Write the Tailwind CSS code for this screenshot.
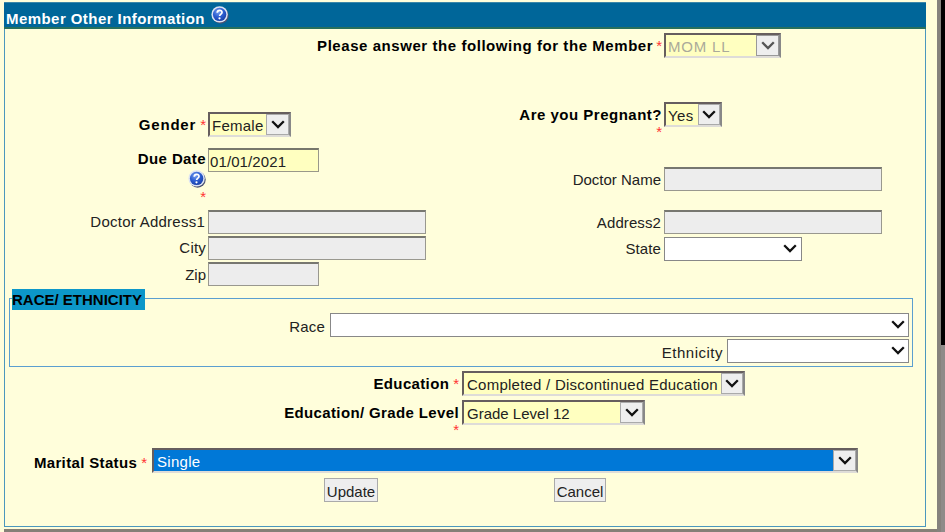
<!DOCTYPE html>
<html lang="en">
<head>
<meta charset="utf-8">
<title>Member Other Information</title>
<script src="https://cdn.jsdelivr.net/npm/@tailwindcss/browser@4"></script>
</head>
<body class="w-[945px] h-[532px] overflow-hidden bg-[#fffedb] font-['Liberation_Sans',Arial,sans-serif] text-[15px] leading-[17px] text-[#222]">
<svg class="absolute h-0 w-0">
  <defs>
    <radialGradient id="ball" cx=".4" cy=".3" r=".75"><stop offset="0" stop-color="#7ba2ee"/><stop offset=".5" stop-color="#2e5fd3"/><stop offset="1" stop-color="#173da5"/></radialGradient>
    <symbol id="help" viewBox="0 0 18 18"><circle cx="9.6" cy="9.6" r="8.1" fill="#4c5372"/><circle cx="8.6" cy="8.4" r="8.2" fill="#dce3f3"/><circle cx="8.6" cy="8.4" r="6.7" fill="url(#ball)"/><path d="M6.2 6.7C6.4 3.6 11.2 3.7 11 6.5C10.9 8.1 8.8 8.1 8.6 10" fill="none" stroke="#fff" stroke-width="1.7"/><circle cx="8.5" cy="12.3" r="1.1" fill="#fff"/></symbol>
    <symbol id="chev" viewBox="0 0 14 9"><path d="M1.2 1.2L7 7L12.8 1.2" fill="none" stroke="currentColor" stroke-width="2.3"/></symbol>
  </defs>
</svg>
<div class="flex h-[532px]">
  <div class="flex w-[937px] flex-col pl-[4px] pt-[2px]">
    <main class="flex h-[525px] w-[922px] flex-col border-[1.5px] border-t-0 border-[#4b97bd]">
      <header class="-mx-px flex h-[27px] shrink-0 items-start border-b-2 border-[#28705c] border-t border-t-[#3b87a8] bg-[#006699] pl-[2px] pt-[2px] font-bold text-white">
        <h1 class="w-[205px] whitespace-nowrap pt-[5px] tracking-[0.44px]">Member Other Information</h1>
        <svg class="mt-px h-[18px] w-[18px]"><use href="#help"/></svg>
      </header>

      <div class="mt-[4px] flex h-[25px] shrink-0">
        <div class="flex w-[659px] justify-end whitespace-nowrap pt-[4px] font-bold text-black"><span class="-mr-px tracking-[0.56px]">Please answer the following for the Member</span><span class="ml-[4px] mr-[2px] font-normal text-[#f33]">*</span></div>
        <div class="flex h-[25px] w-[117px] border-2 border-[#665e5e] border-b-[#dedcd8] border-r-[#888] bg-[#ffffc0]"><span class="flex-1 pl-[2px] pt-[3px] tracking-[0.8px] text-[#aaaa9a]">MOM LL</span><span class="flex w-[23px] items-center justify-center border border-[#999] bg-[#eee] text-[#555]"><svg class="h-[9px] w-[14px]"><use href="#chev"/></svg></span></div>
      </div>

      <div class="flex h-[231px] shrink-0">
        <section class="w-[456px] pt-[54px]">
          <div class="flex h-[24px]"><div class="flex w-[203px] justify-end whitespace-nowrap pt-[4px] font-bold text-black"><span class="tracking-[0.8px]">Gender</span><span class="ml-[4px] mr-[2px] font-normal text-[#f33]">*</span></div>
            <div class="flex h-[25px] w-[83px] border-2 border-[#665e5e] border-b-[#dedcd8] border-r-[#888] bg-[#ffffc0]"><span class="flex-1 pl-[2px] pt-[3px] tracking-[0.25px]">Female</span><span class="flex w-[23px] items-center justify-center border border-[#aaa] bg-[#eee] text-[#111]"><svg class="h-[9px] w-[14px]"><use href="#chev"/></svg></span></div>
          </div>
          <div class="mt-[12px] flex h-[61px]"><div class="flex w-[203px] flex-col items-end whitespace-nowrap pr-[2px] pt-[2px] font-bold text-black"><span class="tracking-[0.4px]">Due Date</span><svg class="mt-[3px] h-[18px] w-[18px]"><use href="#help"/></svg><span class="font-normal leading-[17px] text-[#f33]">*</span></div>
            <div class="h-[24px] w-[111px] border border-[#99988a] border-t-2 border-t-[#77776c] bg-[#ffffc0] pl-px pt-[3px] tracking-[0.1px]">01/01/2021</div></div>
          <div class="flex h-[24px]"><div class="w-[203px] whitespace-nowrap pr-[3px] pt-[4px] text-right tracking-[0.25px]">Doctor Address1</div><div class="mt-px h-[24px] w-[218px] border border-[#99988f] border-t-2 border-t-[#777770] bg-[#ededed]"></div></div>
          <div class="mt-[2px] flex h-[24px]"><div class="w-[203px] pr-[2px] pt-[4px] text-right tracking-[0.2px]">City</div><div class="mt-px h-[24px] w-[218px] border border-[#99988f] border-t-2 border-t-[#777770] bg-[#ededed]"></div></div>
          <div class="mt-[3px] flex h-[24px]"><div class="w-[203px] pr-[2px] pt-[4px] text-right">Zip</div><div class="h-[24px] w-[111px] border border-[#99988f] border-t-2 border-t-[#777770] bg-[#ededed]"></div></div>
        </section>
        <section class="w-[460px] pt-[44px]">
          <div class="flex h-[65px]"><div class="w-[203px] whitespace-nowrap pr-[2px] pt-[4px] text-right font-bold text-black"><span class="tracking-[0.5px]">Are you Pregnant?</span><br><span class="font-normal text-[#f33]">*</span></div>
            <div class="flex h-[25px] w-[58px] border-2 border-[#665e5e] border-b-[#dedcd8] border-r-[#888] bg-[#ffffc0]"><span class="flex-1 pl-[2px] pt-[3px] tracking-[0.4px]">Yes</span><span class="flex w-[22px] items-center justify-center border border-[#aaa] bg-[#eee] text-[#111]"><svg class="h-[9px] w-[14px]"><use href="#chev"/></svg></span></div></div>
          <div class="flex h-[24px]"><div class="w-[203px] pr-[3px] pt-[4px] text-right">Doctor Name</div><div class="w-[218px] border border-[#99988f] border-t-2 border-t-[#777770] bg-[#ededed]"></div></div>
          <div class="mt-[19px] flex h-[24px]"><div class="w-[203px] pr-[3px] pt-[4px] text-right tracking-[0.1px]">Address2</div><div class="w-[218px] border border-[#99988f] border-t-2 border-t-[#777770] bg-[#ededed]"></div></div>
          <div class="mt-[3px] flex h-[24px]"><div class="w-[203px] pr-[3px] pt-[3px] text-right tracking-[0.1px]">State</div><div class="flex w-[138px] items-center justify-end border border-[#888] bg-white pb-px pr-[4px] text-[#111]"><svg class="h-[9px] w-[14px]"><use href="#chev"/></svg></div></div>
        </section>
      </div>

      <section class="ml-[4px] flex w-[904px] shrink-0 flex-col">
        <div class="flex h-[21px] items-center"><div class="mt-[9px] h-[12px] w-[3px] border-l-[1.5px] border-t-[1.5px] border-[#5b9fd0]"></div><h2 class="h-[21px] w-[133px] whitespace-nowrap bg-[#0c97c9] pt-[2px] font-bold text-black">RACE/ ETHNICITY</h2><div class="mt-[9px] h-[12px] flex-1 border-r-[1.5px] border-t-[1.5px] border-[#5b9fd0]"></div></div>
        <div class="flex h-[57px] flex-col items-end border-x-[1.5px] border-b-[1.5px] border-[#5b9fd0] pr-[3px] pt-[3px]">
          <div class="flex h-[24px]"><span class="mr-[5px] pt-[5px] tracking-[0.2px]">Race</span><div class="flex w-[579px] items-center justify-end border border-[#888] bg-white pb-[2px] pr-[3px] text-[#111]"><svg class="h-[9px] w-[14px]"><use href="#chev"/></svg></div></div>
          <div class="mt-[2px] flex h-[24px]"><span class="mr-[4px] pt-[5px] tracking-[0.5px]">Ethnicity</span><div class="flex w-[182px] items-center justify-end border border-[#888] bg-white pb-px pr-[3px] text-[#111]"><svg class="h-[9px] w-[14px]"><use href="#chev"/></svg></div></div>
        </div>
      </section>

      <div class="mt-[4px] flex h-[29px] shrink-0"><div class="flex w-[457px] justify-end whitespace-nowrap pt-[4px] font-bold text-black"><span class="tracking-[0.35px]">Education</span><span class="ml-[4px] mr-[3px] font-normal text-[#f33]">*</span></div>
        <div class="flex h-[25px] w-[283px] border-2 border-[#665e5e] border-b-[#dedcd8] border-r-[#888] bg-[#ffffc0]"><span class="flex-1 whitespace-nowrap pl-[3px] pt-[3px] tracking-[0.24px]">Completed / Discontinued Education</span><span class="flex w-[22px] items-center justify-center border border-[#aaa] bg-[#eee] text-[#111]"><svg class="h-[9px] w-[14px]"><use href="#chev"/></svg></span></div></div>
      <div class="flex h-[48px] shrink-0"><div class="w-[457px] whitespace-nowrap pr-[3px] pt-[4px] text-right font-bold text-black"><span class="tracking-[0.37px]">Education/ Grade Level</span><br><span class="font-normal text-[#f33]">*</span></div>
        <div class="flex h-[25px] w-[183px] border-2 border-[#665e5e] border-b-[#dedcd8] border-r-[#888] bg-[#ffffc0]"><span class="flex-1 pl-[3px] pt-[3px]">Grade Level 12</span><span class="flex w-[23px] items-center justify-center border border-[#aaa] bg-[#eee] text-[#111]"><svg class="h-[9px] w-[14px]"><use href="#chev"/></svg></span></div></div>
      <div class="flex h-[25px] shrink-0"><div class="flex w-[147px] justify-end whitespace-nowrap pt-[6px] font-bold text-black"><span class="tracking-[0.35px]">Marital Status</span><span class="ml-[4px] mr-[5px] font-normal text-[#f33]">*</span></div>
        <div class="flex h-[25px] w-[706px] border-2 border-[#665e5e] border-b-[#dedcd8] border-r-[#888] bg-[#0078d7]"><span class="flex-1 pl-[3px] pt-[3px] tracking-[0.3px] text-white">Single</span><span class="flex w-[23px] items-center justify-center border border-[#aaa] bg-[#eee] text-[#111]"><svg class="h-[9px] w-[14px]"><use href="#chev"/></svg></span></div></div>
      <div class="mt-[5px] flex h-[24px] shrink-0 gap-[176px] pl-[319px]"><button class="w-[54px] border border-[#aaa] bg-[#eee] pt-[2px]">Update</button><button class="w-[52px] border border-[#aaa] bg-[#eee] pt-[2px]">Cancel</button></div>
    </main>
    <div class="mt-[2px] h-[3px] shrink-0 bg-[#858077]"></div>
  </div>
  <div class="w-[4px] bg-[#85827d]"></div>
  <div class="flex-1 bg-[#8e8b89]"><div class="h-[345px] bg-black"></div></div>
</div>
</body>
</html>
